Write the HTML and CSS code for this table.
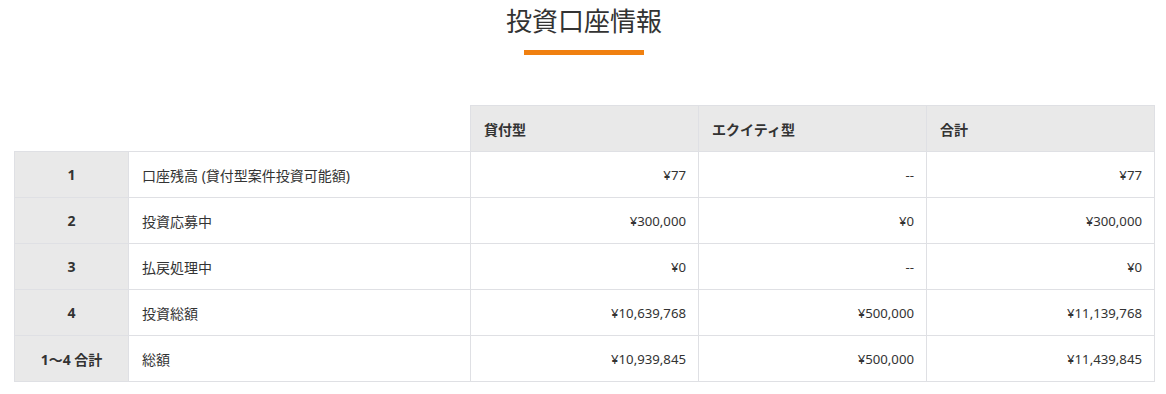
FILE: index.html
```html
<!DOCTYPE html>
<html lang="ja">
<head>
<meta charset="utf-8">
<title>投資口座情報</title>
<link rel="stylesheet" href="styles.css">
</head>
<body>
<div class="page">
  <h1 class="title">投資口座情報</h1>
  <div class="title-bar"></div>
  <table class="account">
    <colgroup>
      <col class="c-no"><col class="c-label"><col class="c-val"><col class="c-val"><col class="c-val">
    </colgroup>
    <thead>
      <tr>
        <th class="blank" colspan="2"></th>
        <th>貸付型</th>
        <th>エクイティ型</th>
        <th>合計</th>
      </tr>
    </thead>
    <tbody>
      <tr><th class="no">1</th><td>口座残高 (貸付型案件投資可能額)</td><td class="num">¥77</td><td class="num">--</td><td class="num">¥77</td></tr>
      <tr><th class="no">2</th><td>投資応募中</td><td class="num">¥300,000</td><td class="num">¥0</td><td class="num">¥300,000</td></tr>
      <tr><th class="no">3</th><td>払戻処理中</td><td class="num">¥0</td><td class="num">--</td><td class="num">¥0</td></tr>
      <tr><th class="no">4</th><td>投資総額</td><td class="num">¥10,639,768</td><td class="num">¥500,000</td><td class="num">¥11,139,768</td></tr>
      <tr><th class="no">1〜4 合計</th><td>総額</td><td class="num">¥10,939,845</td><td class="num">¥500,000</td><td class="num">¥11,439,845</td></tr>
    </tbody>
  </table>
</div>
</body>
</html>
```
FILE: styles.css
```css
html, body {
  margin: 0;
  padding: 0;
  background: #ffffff;
}
body {
  font-family: "Noto Sans", "Noto Sans CJK JP", sans-serif;
  color: #333333;
  font-size: 14px;
}
.page {
  padding: 0 12px 0 14px;
}
.title {
  margin: 0;
  font-size: 26px;
  line-height: 40px;
  font-weight: 400;
  text-align: center;
  color: #333333;
  font-family: "Noto Sans CJK JP", sans-serif;
}
.title-bar {
  width: 120px;
  height: 5px;
  margin: 10px auto 0;
  background: #f08010;
}
.account {
  margin-top: 50px;
  width: 1140px;
  border-collapse: collapse;
  table-layout: fixed;
}
.c-no { width: 114px; }
.c-label { width: 342px; }
.c-val { width: 228px; }
.account th,
.account td {
  height: 45px;
  padding: 0 12px 0 13px;
  border: 1px solid #dfe0e4;
  text-align: left;
  vertical-align: middle;
  white-space: nowrap;
  font-size: 14px;
}
.account thead th {
  background: #e9e9e9;
  font-weight: 700;
}
.account thead th.blank {
  background: #ffffff;
  border-top: none;
  border-left: none;
}
.account th.no {
  background: #e9e9e9;
  text-align: center;
  font-weight: 700;
  padding: 0 6px;
}
.account td.num {
  text-align: right;
  font-size: 13.2px;
}
```
